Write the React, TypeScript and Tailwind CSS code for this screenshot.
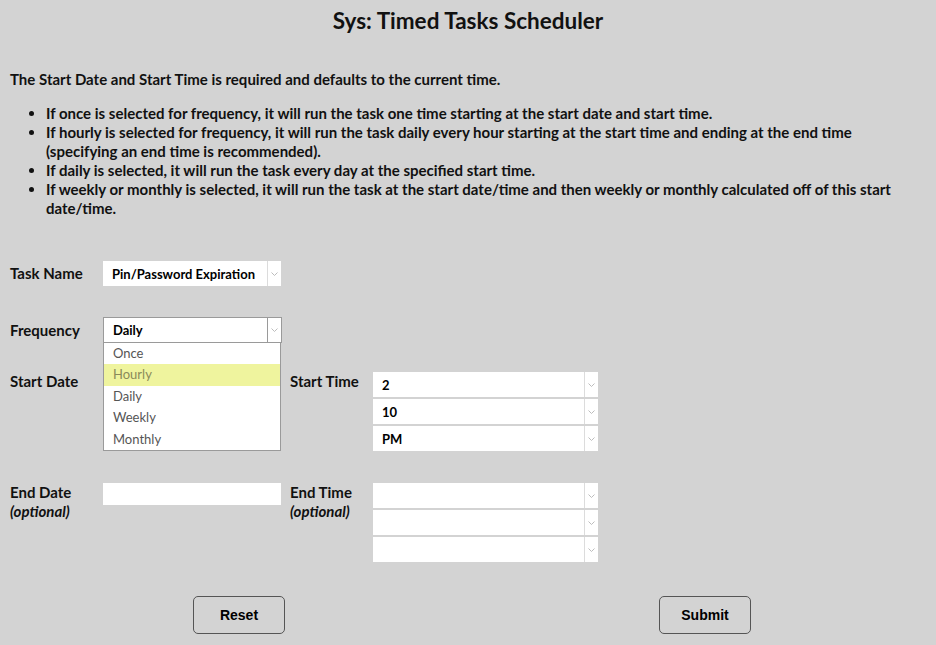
import React from 'react';

const font = "font-['Lato','Open_Sans',sans-serif]";

function Chevron() {
  return (
    <svg width="7" height="4" viewBox="0 0 7 4" fill="none">
      <path d="M0.5 0.5l3 3 3-3" stroke="#bdbdbd" strokeWidth="1" />
    </svg>
  );
}

function FakeSelect({ value, width, bordered }: { value?: string; width: string; bordered?: boolean }) {
  return (
    <div className={`flex h-[25px] bg-white ${width} ${bordered ? 'h-[26px] border border-[#9a9a9a]' : ''}`}>
      <div className="flex flex-1 items-center pl-[9px] pt-[2px] text-[13px] font-bold text-black">{value}</div>
      <div
        className={`flex w-[14px] items-center justify-center border-l ${bordered ? 'border-[#9a9a9a]' : 'border-[#dcdcdc]'}`}
      >
        <Chevron />
      </div>
    </div>
  );
}

export default function App() {
  const options = ['Once', 'Hourly', 'Daily', 'Weekly', 'Monthly'];

  return (
    <div className={`min-h-[645px] w-[936px] bg-[#d3d3d3] text-[#111] ${font}`}>
      <h1 className="pt-[7px] text-center text-[22.5px] font-bold leading-[28px]">Sys: Timed Tasks Scheduler</h1>

      <p className="mt-[35px] pl-[10px] text-[15px] font-bold leading-[19px]">
        The Start Date and Start Time is required and defaults to the current time.
      </p>
      <ul className="mt-[15px] list-disc pl-[46px] pr-[24px] text-[15px] font-bold leading-[19px]">
        <li>If once is selected for frequency, it will run the task one time starting at the start date and start time.</li>
        <li>
          If hourly is selected for frequency, it will run the task daily every hour starting at the start time and ending at
          the end time (specifying an end time is recommended).
        </li>
        <li>If daily is selected, it will run the task every day at the specified start time.</li>
        <li>
          If weekly or monthly is selected, it will run the task at the start date/time and then weekly or monthly calculated
          off of this start date/time.
        </li>
      </ul>

      <div className="mt-[43px] pl-[10px]">
        {/* Task name */}
        <div className="flex items-center">
          <div className="w-[93px] text-[15px] font-bold">Task Name</div>
          <FakeSelect value="Pin/Password Expiration" width="w-[178px]" />
        </div>

        {/* Frequency */}
        <div className="relative mt-[31px] flex items-center">
          <div className="w-[93px] text-[15px] font-bold">Frequency</div>
          <FakeSelect value="Daily" width="w-[179px]" bordered />
          <div className="absolute left-[93px] top-[25px] z-10 w-[178px] border border-[#9a9a9a] bg-white">
            {options.map((o) => (
              <div
                key={o}
                className={`h-[21.4px] pl-[9px] text-[13px] leading-[21px] ${o === 'Hourly' ? 'bg-[#eff49e] text-[#8a8a5a]' : 'text-[#555]'}`}
              >
                {o}
              </div>
            ))}
          </div>
        </div>

        {/* Start date / time */}
        <div className="mt-[29px] flex">
          <div className="w-[93px] text-[15px] font-bold leading-[19px]">Start Date</div>
          <div className="h-[24px] w-[178px] bg-white" />
          <div className="ml-[9px] w-[83px] text-[15px] font-bold leading-[19px]">Start Time</div>
          <div className="flex flex-col gap-[2px]">
            <FakeSelect value="2" width="w-[225px]" />
            <FakeSelect value="10" width="w-[225px]" />
            <FakeSelect value="PM" width="w-[225px]" />
          </div>
        </div>

        {/* End date / time */}
        <div className="mt-[32px] flex">
          <div className="w-[93px] text-[15px] font-bold leading-[19px]">
            End Date
            <br />
            <i>(optional)</i>
          </div>
          <div className="h-[22px] w-[178px] bg-white" />
          <div className="ml-[9px] w-[83px] text-[15px] font-bold leading-[19px]">
            End Time
            <br />
            <i>(optional)</i>
          </div>
          <div className="flex flex-col gap-[2px]">
            <FakeSelect width="w-[225px]" />
            <FakeSelect width="w-[225px]" />
            <FakeSelect width="w-[225px]" />
          </div>
        </div>
      </div>

      <div className="mt-[34px] flex font-['Liberation_Sans',Arial,sans-serif]">
        <button className="ml-[193px] h-[38px] w-[92px] rounded-[5px] border border-[#555] text-[14px] font-bold text-black">
          Reset
        </button>
        <button className="ml-[374px] h-[38px] w-[92px] rounded-[5px] border border-[#555] text-[14px] font-bold text-black">
          Submit
        </button>
      </div>
    </div>
  );
}
